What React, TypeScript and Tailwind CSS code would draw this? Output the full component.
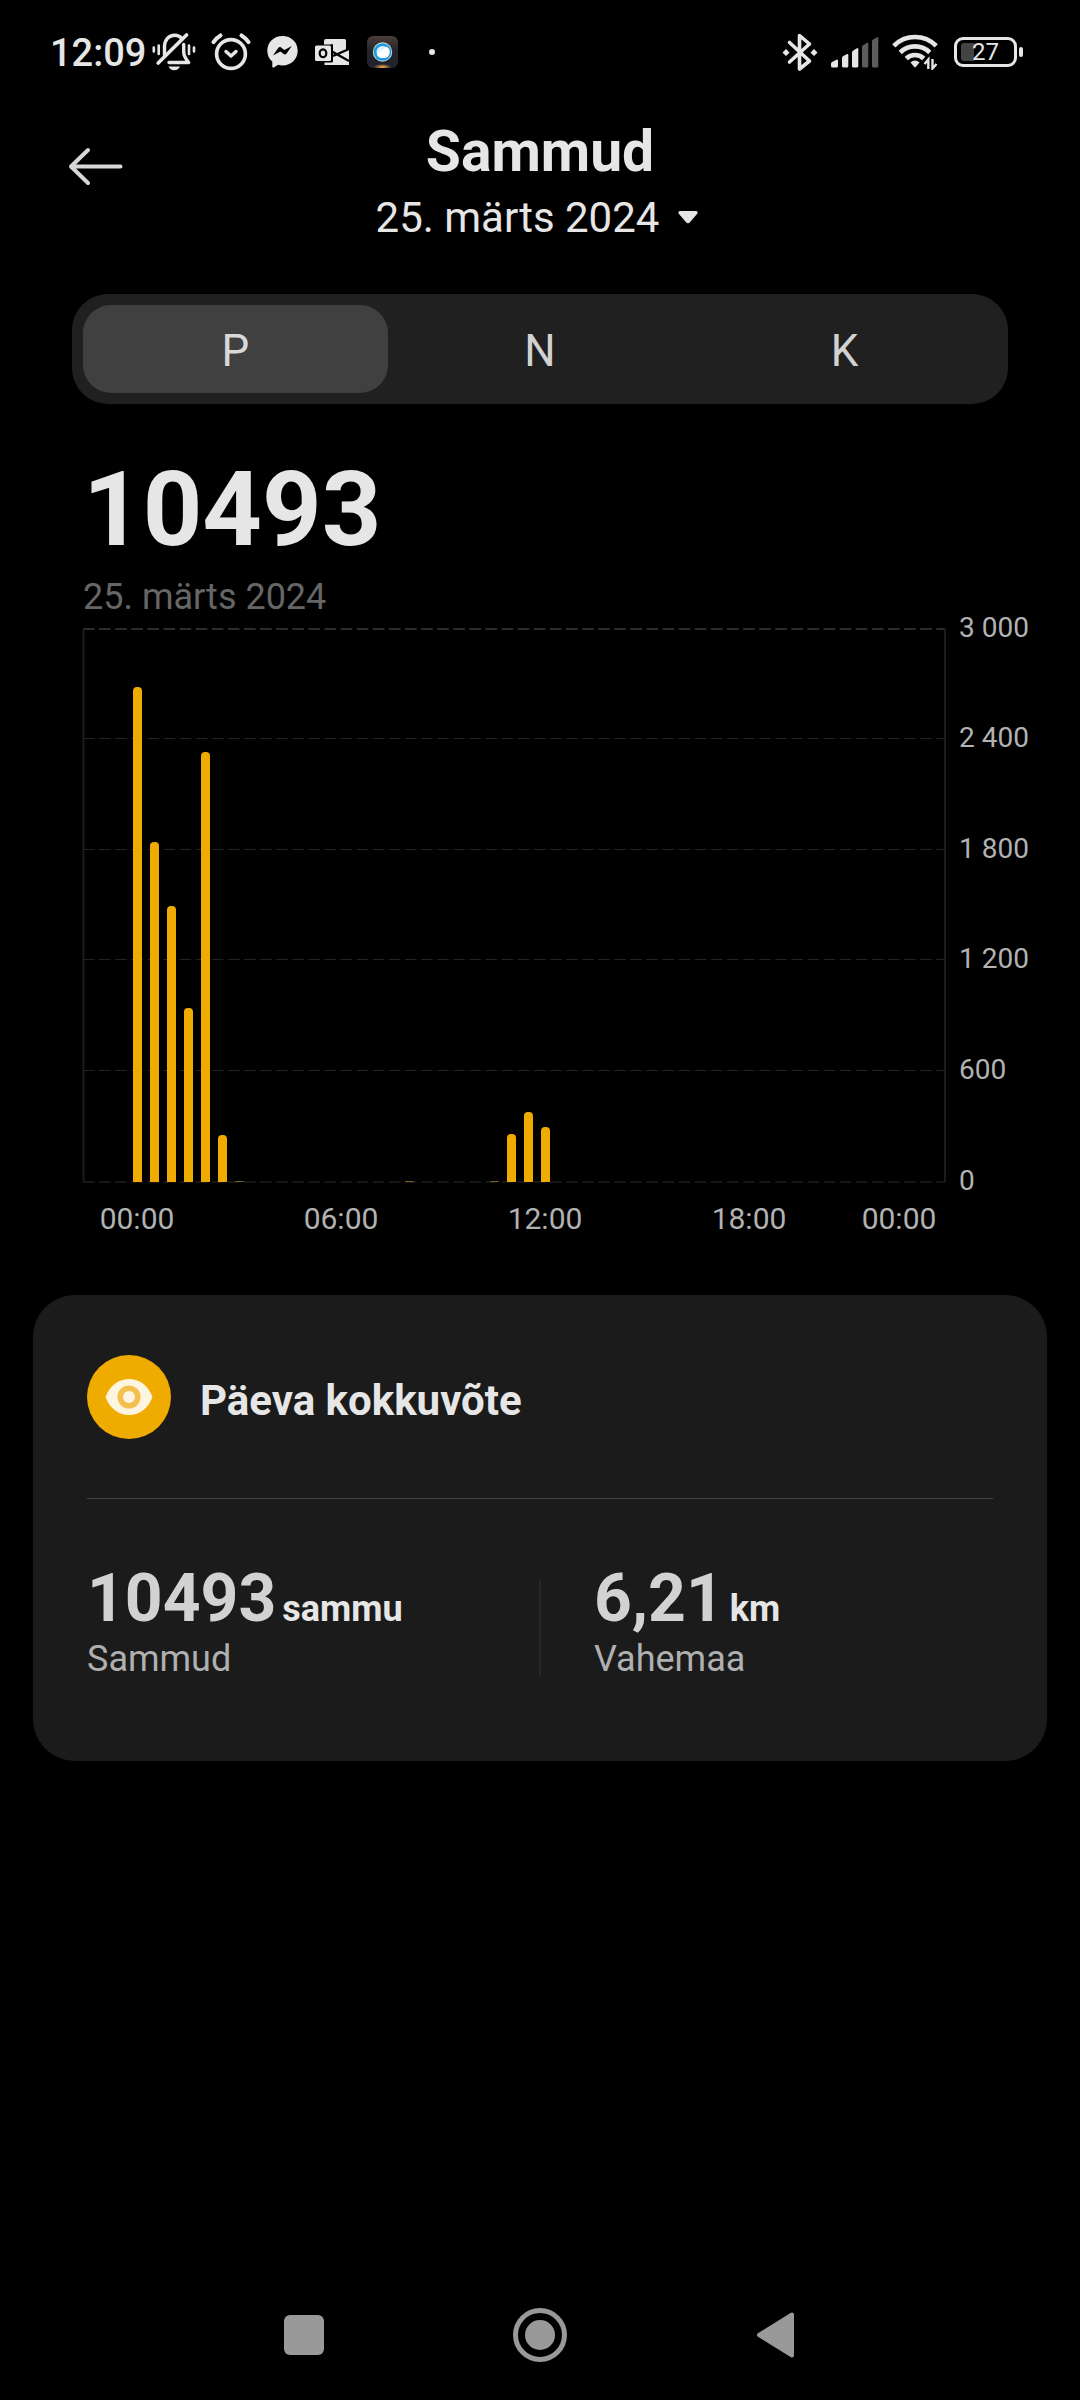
import { useState } from "react";

const steps = [
  { slot: 0, value: 2688 },
  { slot: 1, value: 1842 },
  { slot: 2, value: 1498 },
  { slot: 3, value: 945 },
  { slot: 4, value: 2335 },
  { slot: 5, value: 255 },
  { slot: 6, value: 6 },
  { slot: 16, value: 6 },
  { slot: 21, value: 6 },
  { slot: 22, value: 260 },
  { slot: 23, value: 380 },
  { slot: 24, value: 300 },
];

const yLabels = ["3 000", "2 400", "1 800", "1 200", "600", "0"];
const xLabels = [
  { x: 137, text: "00:00" },
  { x: 341, text: "06:00" },
  { x: 545, text: "12:00" },
  { x: 749, text: "18:00" },
  { x: 899, text: "00:00" },
];

const LEFT = 83;
const RIGHT = 945;
const TOP = 18;
const BOTTOM = 571;

function barPath(slot: number, value: number) {
  const x = 133 + slot * 17;
  const height = Math.round((value / 3000) * (BOTTOM - TOP));
  const r = Math.min(4, height);
  const y = BOTTOM - height;
  return `M${x} ${BOTTOM}V${y + r}Q${x} ${y} ${x + r} ${y}H${x + 9 - r}Q${x + 9} ${y} ${x + 9} ${y + r}V${BOTTOM}Z`;
}

function Chart() {
  return (
    <svg viewBox="0 0 1080 636" className="block w-full" role="img" aria-label="Sammud päeva jooksul">
      {yLabels.map((label, i) => {
        const y = TOP + (i * (BOTTOM - TOP)) / 5;
        const edge = i === 0 || i === 5;
        return (
          <g key={label}>
            <line
              x1={LEFT}
              x2={RIGHT}
              y1={edge ? y : Math.floor(y) - 0.5}
              y2={edge ? y : Math.floor(y) - 0.5}
              stroke={i === 0 ? "#2c2c2c" : i === 5 ? "#161616" : "#232323"}
              strokeWidth={edge ? 2 : 1}
              strokeDasharray="11.6 4.5"
            />
            <text x={959} y={Math.floor(y) + 8} fontSize={28} fill="#b2b2b2">
              {label}
            </text>
          </g>
        );
      })}
      <path d={`M${LEFT + 0.5} ${TOP}V${BOTTOM}M${RIGHT} ${TOP}V${BOTTOM}`} stroke="#1c1c1c" strokeWidth={2} />
      {steps.map((s) => (
        <path key={s.slot} d={barPath(s.slot, s.value)} fill={s.value < 10 ? "#7a5f22" : "#f0ab00"} />
      ))}
      {xLabels.map((l) => (
        <text key={l.x} x={l.x} y={618} fontSize={30} textAnchor="middle" fill="#b2b2b2">
          {l.text}
        </text>
      ))}
    </svg>
  );
}

function MutedBellIcon() {
  return (
    <svg viewBox="0 0 44 38" className="h-[38px] w-11" fill="none" stroke="#e6e6e6" strokeWidth="3.4" strokeLinecap="round">
      <path d="M1.8 14.5v4M6.7 12.5v8.5M37 12.5v8.5M42 14.5v4" strokeWidth="2.6" />
      <path d="M12.5 22V13.5C12.5 7 17 2.2 22.5 2.2c3 0 5.500 1.200 7 3" />
      <path d="M31.700 11.500V19c0 4 1.500 6.300 5 10.500H17" strokeLinejoin="round" />
      <path d="M6.200 30 34.500 2" strokeWidth="3.600" />
      <path d="M16.500 33.500h11.500c-1 2.300-3 3.700-5.800 3.700s-4.700-1.400-5.700-3.700z" fill="#e6e6e6" stroke="none" />
    </svg>
  );
}

function AlarmIcon() {
  return (
    <svg viewBox="0 0 40 38" className="h-[38px] w-10" fill="none" stroke="#e6e6e6" strokeWidth="3.6" strokeLinecap="round" strokeLinejoin="round">
      <circle cx="20" cy="21" r="14.400" />
      <path d="M2.500 9.200Q5.500 4.700 9.500 2.400M37.500 9.200Q34.500 4.700 30.500 2.400" strokeWidth="4" />
      <path d="M15 18.500l5 4.500 5-4.500" strokeWidth="3.400" />
    </svg>
  );
}

function MessengerIcon() {
  return (
    <svg viewBox="0 0 31 32" className="h-8 w-[31px]">
      <path d="M15.500 0C6.800 0 .3 6.300.3 14.700c0 4.500 1.900 8.300 5 10.900v5c0 .9.700 1.300 1.500 1l4.300-2.800c1.400.4 2.900.6 4.400.6 8.700 0 15.200-6.300 15.200-14.700S24.200 0 15.500 0z" fill="#e6e6e6" />
      <path d="M6 19.500l5.200-7.600c.7-1 2-1.200 2.900-.5l3.300 2.500 7.400-4-5.200 7.700c-.7 1-2 1.200-2.900.5l-3.300-2.600z" fill="#000" />
    </svg>
  );
}

function OutlookIcon() {
  return (
    <svg viewBox="0 0 34 27" className="h-[27px] w-[34px]">
      <path d="M11 0h18.500a1.500 1.500 0 0 1 1.500 1.500V13l-13 4V5.500h-9V2a2 2 0 0 1 2-2z" fill="#e6e6e6" />
      <path d="M18 16l16-6v16H9.500v-3H18z" fill="#e6e6e6" />
      <path d="M17 12.500l17 9.500M18 17l16-7" stroke="#000" strokeWidth="2.400" />
      <rect x="0" y="6.500" width="16" height="15.500" rx="1.500" fill="#e6e6e6" />
      <path d="M16.800 5v17.800H8" fill="none" stroke="#000" strokeWidth="1.400" />
      <ellipse cx="8" cy="14.200" rx="3.300" ry="3.900" fill="none" stroke="#000" strokeWidth="2.200" />
    </svg>
  );
}

function LensIcon() {
  return (
    <svg viewBox="0 0 31 32" className="h-8 w-[31px]">
      <defs>
        <linearGradient id="lensFrame" x1="0" y1="0" x2="0" y2="1">
          <stop offset="0" stopColor="#4b3d37" />
          <stop offset=".45" stopColor="#26242b" />
          <stop offset="1" stopColor="#20222f" />
        </linearGradient>
        <radialGradient id="lensGlow">
          <stop offset="0" stopColor="#ffb347" />
          <stop offset="1" stopColor="#ffb347" stopOpacity="0" />
        </radialGradient>
      </defs>
      <rect width="31" height="32" rx="6" fill="url(#lensFrame)" />
      <ellipse cx="15.500" cy="31" rx="9" ry="3" fill="url(#lensGlow)" />
      <circle cx="15.500" cy="16" r="9.700" fill="#cfe3d8" />
      <circle cx="15.500" cy="16" r="8.800" fill="#1e9be0" />
      <circle cx="15.500" cy="16" r="6" fill="#dff1fb" />
      <path d="M10 19l9-8.500a6 6 0 0 1-3 11.500 6 6 0 0 1-6-3z" fill="#fff" />
    </svg>
  );
}

function BluetoothIcon() {
  return (
    <svg viewBox="0 0 36 39" className="h-[39px] w-9" fill="none" stroke="#e6e6e6" strokeWidth="3.6" strokeLinejoin="round" strokeLinecap="round">
      <path d="M7.500 9.500 27.500 28 17.500 36V2.500l10 8.500L7.500 29" />
      <path d="M4 16l3.500 3.500L4 23 .5 19.500zM32 16l3.500 3.500L32 23l-3.500-3.500z" fill="#e6e6e6" stroke="none" />
    </svg>
  );
}

function SignalIcon() {
  return (
    <svg viewBox="0 0 48 31" className="h-[31px] w-12">
      <path d="M0 26.500Q0 25.500 1 25l5-2.500Q7 22.300 7 23.500V29q0 1.500-1.500 1.500h-4Q0 30.500 0 29z" fill="#e6e6e6" />
      <path d="M11 21q0-1 1-1.700l4-2.300q1.300-.4 1.300 1V29q0 1.500-1.500 1.500h-3.300Q11 30.500 11 29z" fill="#e6e6e6" />
      <path d="M21 15.500q0-1 1-1.700l4-2.600q1.300-.4 1.300 1V29q0 1.500-1.500 1.500h-3.300Q21 30.500 21 29z" fill="#e6e6e6" />
      <path d="M31 10q0-1 1-1.700l4-2.600q1.300-.4 1.300 1V29q0 1.500-1.500 1.500h-3.300Q31 30.500 31 29z" fill="#5c5c5c" />
      <path d="M41 4.300q0-1 1-1.700L46 .2q1.300-.4 1.300 1V29q0 1.500-1.500 1.500h-3.300Q41 30.500 41 29z" fill="#5c5c5c" />
    </svg>
  );
}

function WifiIcon() {
  return (
    <svg viewBox="0 0 47 36" className="h-9 w-[47px]" fill="none" stroke="#e6e6e6" strokeWidth="4.6">
      <path d="M1.800 11.800a30 30 0 0 1 42.400 0" />
      <path d="M8.200 18.500a21 21 0 0 1 29.600 0" />
      <path d="M14.300 24.500a12.500 12.500 0 0 1 17.400 0" />
      <path d="M18.500 28.500q4.500-4 9 0L23 33.700z" fill="#e6e6e6" stroke="none" />
      <path d="M36.300 35v-9.500l-3.800 4.500M40.500 25v9.500l4-4.500" strokeWidth="2.400" />
    </svg>
  );
}

function Battery() {
  return (
    <div className="ml-0.5 flex items-center gap-0.5" aria-label="Aku 27%">
      <div className="flex h-[30px] w-[63px] items-center rounded-[9px] border-3 border-[#e6e6e6] p-1">
        <div className="h-[18px] w-[13px] rounded-l-[3px] bg-[#434343]" />
        <span className="-ml-0.5 text-[24px] leading-none text-[#e6e6e6]">27</span>
      </div>
      <div className="h-2.5 w-1 rounded-full bg-[#e6e6e6]" />
    </div>
  );
}

function StatusBar() {
  return (
    <div className="flex h-[104px] items-center justify-between pr-[57px] pl-[50px]">
      <div className="flex items-center">
        <span className="w-[102px] pt-0.5 text-[38px] leading-none font-medium">12:09</span>
        <MutedBellIcon />
        <span className="w-[15px]" />
        <AlarmIcon />
        <span className="w-4" />
        <MessengerIcon />
        <span className="w-[17px]" />
        <OutlookIcon />
        <span className="w-[18px]" />
        <LensIcon />
        <span className="ml-[31px] size-1.5 rounded-full bg-[#e6e6e6]" />
      </div>
      <div className="flex items-center gap-[13px]">
        <BluetoothIcon />
        <SignalIcon />
        <WifiIcon />
        <Battery />
      </div>
    </div>
  );
}

function Header() {
  return (
    <header className="grid grid-cols-[1fr_auto_1fr] px-[67px]">
      <button type="button" aria-label="Tagasi" className="mt-[42px] h-10 w-14">
        <svg viewBox="0 0 56 40" className="h-10 w-14" fill="none" stroke="#d8d8d8" strokeWidth="4" strokeLinecap="round" strokeLinejoin="round">
          <path d="M53.500 20.500H4M21 4 4 20.500 21 37" />
        </svg>
      </button>
      <div className="flex flex-col items-center pt-4">
        <h1 className="text-[57px] leading-[64px] font-bold">Sammud</h1>
        <button type="button" className="mt-1 flex items-center gap-[19px] pr-1.5 text-[42px] leading-[60px]">
          25. märts 2024
          <svg viewBox="0 0 20 14" className="h-3.5 w-5">
            <path d="M2.500 0h15c2 0 2.800 1.600 1.500 3l-7.300 8.500c-1 1.100-2.400 1.100-3.400 0L1 3C-.3 1.600.5 0 2.500 0z" fill="#e6e6e6" />
          </svg>
        </button>
      </div>
    </header>
  );
}

function PeriodTabs() {
  const [active, setActive] = useState("P");
  return (
    <div role="tablist" className="mx-[72px] mt-[46px] grid h-[110px] grid-cols-3 rounded-[36px] bg-[#202020] p-[11px]">
      {["P", "N", "K"].map((p) => (
        <button
          key={p}
          type="button"
          role="tab"
          aria-selected={active === p}
          onClick={() => setActive(p)}
          className={
            active === p
              ? "rounded-[28px] bg-[#404040] pt-[3px] text-[44px] text-[#d8d8d8]"
              : "rounded-[28px] pt-[3px] text-[44px] text-[#d2d2d2]"
          }
        >
          {p}
        </button>
      ))}
    </div>
  );
}

function Stat({ value, unit, label }: { value: string; unit: string; label: string }) {
  return (
    <div>
      <p className="flex items-baseline gap-1.5 font-bold">
        <span className="text-[66px] leading-[78px] text-[#d2d2d2]">{value}</span>
        <span className="text-[36px] leading-10">{unit}</span>
      </p>
      <p className="text-[36px] leading-[42px] text-[#b0b0b0]">{label}</p>
    </div>
  );
}

function SummaryCard() {
  return (
    <section className="mx-[33px] mt-12 rounded-[42px] bg-[#1b1b1b] px-[54px] pt-[60px] pb-[81px]">
      <div className="flex items-center gap-[29px]">
        <svg viewBox="0 0 84 84" className="size-[84px]">
          <circle cx="42" cy="42" r="42" fill="#f0ab00" />
          <path d="M18.500 42C23 30 32 24 42 24s19 6 23.500 18C61 54 52 60 42 60s-19-6-23.500-18z" fill="#fdf5e0" />
          <circle cx="42" cy="42" r="11.500" fill="#f3bf4d" />
          <circle cx="42" cy="42" r="6" fill="#fdf5e0" />
        </svg>
        <h2 className="pt-2 text-[42px] leading-[50px] font-bold">Päeva kokkuvõte</h2>
      </div>
      <hr className="mt-[59px] border-[#444]" />
      <div className="mt-[61px] grid grid-cols-[1fr_auto_1fr] items-center">
        <Stat value="10493" unit="sammu" label="Sammud" />
        <div className="mt-4 h-24 w-0.5 bg-[#282828]" />
        <div className="pl-[53px]">
          <Stat value="6,21" unit="km" label="Vahemaa" />
        </div>
      </div>
    </section>
  );
}

function NavBar() {
  return (
    <nav className="mt-auto grid h-[130px] grid-cols-3 place-items-center px-[17.2%]">
      <button type="button" aria-label="Rakendused" className="size-10 rounded-md bg-[#999]" />
      <button type="button" aria-label="Avaleht" className="flex size-[54px] items-center justify-center rounded-full border-5 border-[#999]">
        <span className="size-[30px] rounded-full bg-[#999]" />
      </button>
      <button type="button" aria-label="Tagasi">
        <svg viewBox="0 0 40 46" className="h-[46px] w-10">
          <path d="M36 2.500v41L3 23z" fill="#999" stroke="#999" strokeWidth="4" strokeLinejoin="round" />
        </svg>
      </button>
    </nav>
  );
}

export default function App() {
  return (
    <div className="flex min-h-screen flex-col bg-black font-[Roboto,sans-serif] text-[#e6e6e6]">
      <StatusBar />
      <Header />
      <PeriodTabs />
      <main>
        <div className="px-[83px] pt-[54px]">
          <p className="text-[104px] leading-[104px] font-bold">10493</p>
          <p className="mt-[21px] text-[36px] leading-7 text-[#666]">25. märts 2024</p>
        </div>
        <Chart />
        <SummaryCard />
      </main>
      <NavBar />
    </div>
  );
}
